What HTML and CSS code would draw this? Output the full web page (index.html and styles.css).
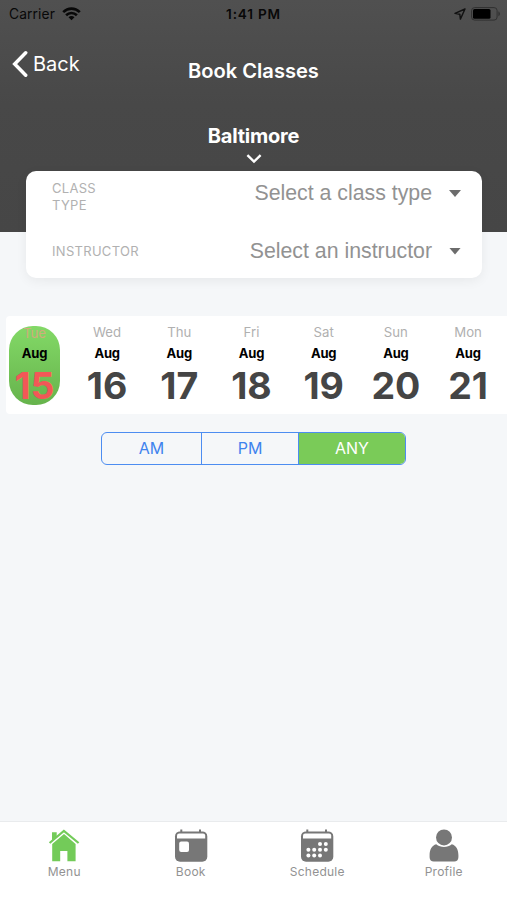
FILE: index.html
```html
<!DOCTYPE html>
<html lang="en">
<head>
<meta charset="utf-8">
<title>Book Classes</title>
<link rel="stylesheet" href="styles.css">
</head>
<body>
<div class="screen">
  <header class="header">
    <div class="status">
      <div class="carrier"><span>Carrier</span>
        <svg width="19" height="14" viewBox="0 0 19 14" fill="none" stroke="#080808" stroke-width="2.6"><path d="M1.2 5.1C6 .5 13 .5 17.8 5.1M4.1 8.2c3.1-3 7.7-3 10.8 0"/><path d="M9.5 13.2 6.5 10.3c1.7-1.6 4.3-1.6 6 0z" fill="#080808" stroke="none"/></svg>
      </div>
      <span class="clock">1:41 PM</span>
      <div class="power">
        <svg width="12" height="12" viewBox="0 0 12 12" fill="none" stroke="#111" stroke-width="1.4" stroke-linejoin="round"><path d="M11 1 1 5.4l4.8.8.6 4.9z"/></svg>
        <svg width="30" height="14" viewBox="0 0 30 14"><rect x=".6" y=".6" width="25.5" height="12.5" rx="3" fill="none" stroke="#303030"/><rect x="2" y="2" width="17.5" height="9.8" rx="1.5" fill="#000"/><path d="M27.4 4.6c2 .7 2 3.8 0 4.6z" fill="#303030"/></svg>
      </div>
    </div>
    <div class="nav">
      <a class="back"><svg width="16" height="28" viewBox="0 0 16 28" fill="none" stroke="#fff" stroke-width="3.5" stroke-linecap="round"><path d="M13.7 2.8 2.7 14l11 11.2"/></svg><span>Back</span></a>
      <h1 class="title">Book Classes</h1>
    </div>
    <div class="location">
      <span>Baltimore</span>
      <svg width="16" height="10" viewBox="0 0 16 10" fill="none" stroke="#fff" stroke-width="2.4"><path d="m1.4 1.2 6.6 6.4 6.6-6.4"/></svg>
    </div>
  </header>
  <section class="filters">
    <div class="filter"><span class="label">CLASS<br>TYPE</span><span class="value">Select a class type</span><i class="caret"></i></div>
    <div class="filter instructor"><span class="label">INSTRUCTOR</span><span class="value">Select an instructor</span><i class="caret"></i></div>
  </section>
  <section class="dates">
    <div class="day selected"><span class="name">Tue</span><b class="month">Aug</b><b class="number">15</b></div>
    <div class="day"><span class="name">Wed</span><b class="month">Aug</b><b class="number">16</b></div>
    <div class="day"><span class="name">Thu</span><b class="month">Aug</b><b class="number">17</b></div>
    <div class="day"><span class="name">Fri</span><b class="month">Aug</b><b class="number">18</b></div>
    <div class="day"><span class="name">Sat</span><b class="month">Aug</b><b class="number">19</b></div>
    <div class="day"><span class="name">Sun</span><b class="month">Aug</b><b class="number">20</b></div>
    <div class="day"><span class="name">Mon</span><b class="month">Aug</b><b class="number">21</b></div>
  </section>
  <div class="segments"><span>AM</span><span>PM</span><span class="active">ANY</span></div>
  <nav class="tabs">
    <a class="tab"><svg width="34" height="34" viewBox="0 0 34 34" fill="#73cb59"><path d="M5 3.2h4.7v4L5 11.4z"/><path d="m2.6 14 14.3-12 14.7 12" fill="none" stroke="#73cb59" stroke-width="2.2"/><path d="M17 5 28.6 15v17.3h-8.2V22h-7.2v10.3H5.2V15z"/></svg><span>Menu</span></a>
    <a class="tab"><svg width="34" height="34" viewBox="0 0 34 34" fill="#777"><path d="M7.3.6v4M26 .6v4" stroke="#777" stroke-width="2"/><rect x="1" y="2.4" width="32.3" height="30.4" rx="5"/><path d="M3 9.6V6.6Q3 4.5 5.2 4.5H29q2.2 0 2.2 2.1v3z" fill="#fff"/><rect x="5.2" y="12.6" width="9.8" height="10.4" rx="2" fill="#fff"/></svg><span>Book</span></a>
    <a class="tab"><svg width="34" height="34" viewBox="0 0 34 34" fill="#777"><path d="M7.3.6v4M26 .6v4" stroke="#777" stroke-width="2"/><rect x="1" y="2.4" width="32.3" height="30.4" rx="5"/><path d="M3 9.6V6.6Q3 4.5 5.2 4.5H29q2.2 0 2.2 2.1v3z" fill="#fff"/><g fill="#fff"><circle cx="20" cy="15" r="2"/><circle cx="25.8" cy="15" r="2"/><circle cx="8.4" cy="20.8" r="2"/><circle cx="14.2" cy="20.8" r="2"/><circle cx="20" cy="20.8" r="2"/><circle cx="25.8" cy="20.8" r="2"/><circle cx="8.4" cy="26.4" r="2"/><circle cx="14.2" cy="26.4" r="2"/><circle cx="20" cy="26.4" r="2"/></g></svg><span>Schedule</span></a>
    <a class="tab"><svg width="34" height="34" viewBox="0 0 34 34" fill="#777"><circle cx="17" cy="8.4" r="8"/><path d="M9.2 15.3c4.4 3.5 11.2 3.5 15.6 0 4.3 1.3 6.6 5.2 6.6 10.8v2.2c0 2.6-1.7 4.3-4.2 4.3H6.8c-2.5 0-4.2-1.7-4.2-4.3v-2.2c0-5.6 2.3-9.5 6.6-10.8z"/></svg><span>Profile</span></a>
  </nav>
</div>
</body>
</html>
```
FILE: styles.css
```css
* { box-sizing: border-box; }
body { margin: 0; font-family: Inter, "Liberation Sans", sans-serif; }
svg { display: block; flex: none; }
.screen { width: 507px; height: 900px; overflow: hidden; display: flex; flex-direction: column; background: #f5f7f9; }
.header { height: 232px; flex: none; background: linear-gradient(#505050, #484848 45%, #464646); color: #fff; }
.status { height: 27px; padding: 0 6px 0 9px; display: grid; grid-template-columns: 1fr auto 1fr; align-items: center; font-size: 13.8px; color: #080808; }
.carrier, .power { display: flex; align-items: center; gap: 7px; }
.carrier { letter-spacing: .1px; }
.power { justify-content: flex-end; gap: 5px; }
.clock { margin-right: 3px; font-weight: 600; font-size: 13.6px; letter-spacing: .8px; }
.nav { height: 86px; display: grid; grid-template-columns: 1fr auto 1fr; }
.back { display: flex; align-items: center; gap: 5px; padding-left: 12px; height: 74px; font-size: 20px; }
.title { margin: 0; height: 88px; line-height: 88px; font-size: 20.1px; font-weight: 600; }
.location { display: flex; flex-direction: column; align-items: center; gap: 6px; padding-top: 11px; line-height: 24px; font-size: 20px; font-weight: 700; letter-spacing: -.2px; }
.filters { flex: none; width: 456px; height: 107px; margin: -61px 0 0 26px; padding: 0 21px 0 26px; border-radius: 10px; background: #fff; box-shadow: 0 3px 12px rgba(0,0,0,.06); }
.filter { height: 45px; display: flex; align-items: center; }
.instructor { height: 70px; }
.label { padding-top: 7px; line-height: 17px; font-size: 13px; letter-spacing: .3px; color: #b1b1b1; }
.instructor .label { padding-top: 0; }
.value { margin-left: auto; font: 21.3px "Liberation Sans", Arial, sans-serif; color: #929292; }
.caret { width: 12px; height: 7px; margin-left: 17px; background: #6c6c6c; clip-path: polygon(0 0, 100% 0, 50% 100%); }
.dates { flex: none; height: 98px; margin: 38px 0 0 6px; display: grid; grid-template-columns: 65px repeat(6, 72.2px); background: #fff; border-radius: 4px 0 0 4px; }
.day { display: flex; flex-direction: column; align-items: center; padding-top: 8px; }
.name { line-height: 17px; font-size: 13.2px; color: #b0b0b0; }
.month { margin-top: 4px; line-height: 16px; font-size: 13px; color: #000; font-weight: 700; letter-spacing: -.2px; }
.number { margin-top: 3px; line-height: 44px; font-size: 37.5px; color: #454545; font-weight: 700; }
.selected { width: 51px; height: 79px; margin: 10px 0 0 3px; padding-top: 0; border-radius: 24px; background: linear-gradient(#83d967, #66b34c); }
.selected .name { line-height: 14px; color: #d0ab7c; }
.selected .month { margin-top: 5px; }
.selected .number { color: #f25857; }
.segments { flex: none; width: 305px; height: 33px; margin: 18px 0 0 101px; display: grid; grid-template-columns: 99px 97px 1fr; border: 1px solid #4c8df1; border-radius: 6px; overflow: hidden; line-height: 31px; text-align: center; font-size: 16px; color: #3f83ee; }
.segments span + span { border-left: 1px solid #4c8df1; }
.segments .active { background: #7acb58; color: #fff; }
.tabs { height: 79px; margin-top: auto; padding: 7px 0 0 1px; border-top: 1px solid #e9ebed; display: grid; grid-template-columns: repeat(4, 126.5px); background: #fff; }
.tab { display: flex; flex-direction: column; align-items: center; font-size: 12px; line-height: 17px; letter-spacing: .25px; color: #929292; }
```
